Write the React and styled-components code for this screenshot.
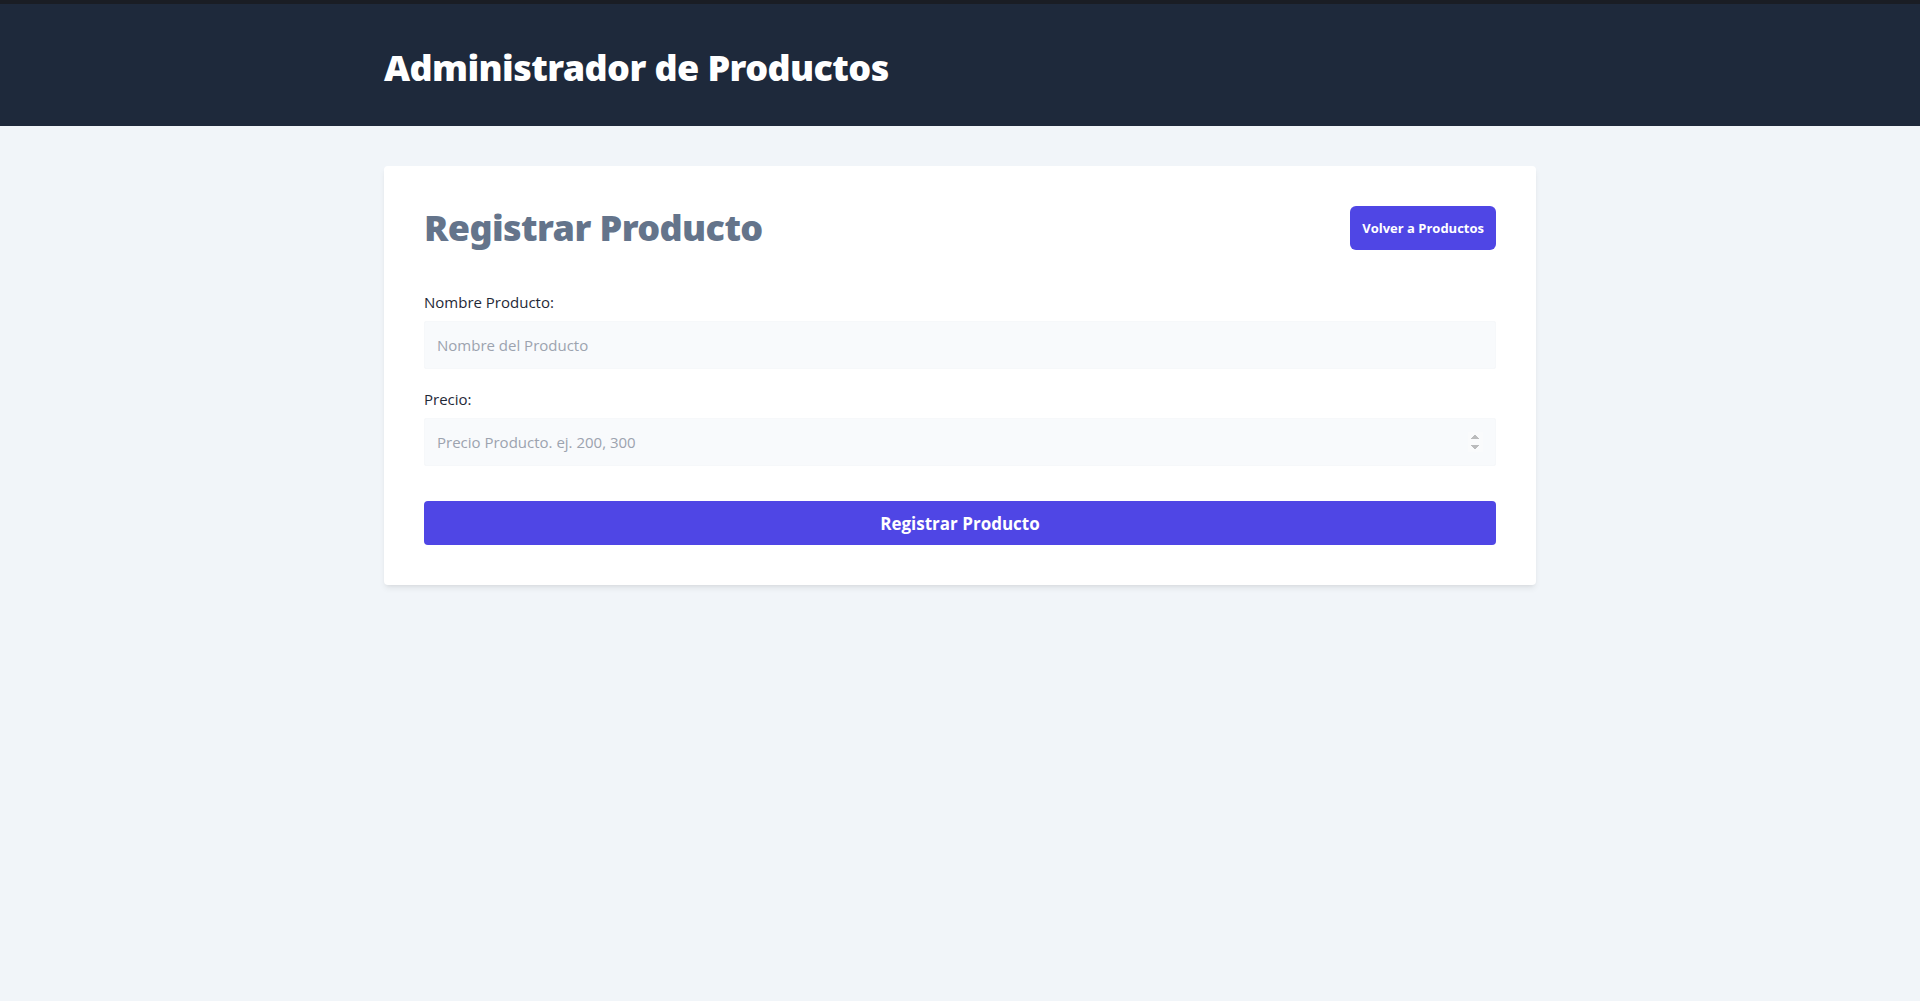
import React, { useState } from 'react';
import styled, { createGlobalStyle } from 'styled-components';

const GlobalStyle = createGlobalStyle`
  html, body {
    margin: 0;
    padding: 0;
  }
  body {
    background-color: #f1f5f9;
    font-family: "Open Sans", "Noto Sans", sans-serif;
    color: #1f2937;
    min-height: 100vh;
  }
  * {
    box-sizing: border-box;
  }
`;

const Header = styled.header`
  background-color: #1e293b;
  border-top: 4px solid #1a1d24;
  height: 126px;
  display: flex;
  align-items: center;
`;

const Wrapper = styled.div`
  width: 1152px;
  margin-right: auto;
  margin-left: auto;
`;

const AppTitle = styled.h1`
  margin: 0;
  color: #ffffff;
  font-family: "Noto Sans", "Open Sans", sans-serif;
  font-weight: 900;
  font-size: 36px;
  line-height: 40px;
  letter-spacing: -0.6px;
  padding-top: 6px;
`;

const Main = styled.main`
  padding-top: 40px;
`;

const Card = styled.div`
  background-color: #ffffff;
  border-radius: 4px;
  box-shadow: 0 4px 6px -1px rgba(0, 0, 0, 0.08), 0 2px 4px -2px rgba(0, 0, 0, 0.06);
  padding: 40px;
`;

const CardTop = styled.div`
  display: flex;
  justify-content: space-between;
  align-items: center;
  margin-bottom: 40px;
`;

const Heading = styled.h2`
  margin: 0;
  color: #64748b;
  font-family: "Noto Sans", "Open Sans", sans-serif;
  font-weight: 900;
  font-size: 36px;
  line-height: 44px;
  letter-spacing: -0.6px;
`;

const BackButton = styled.button`
  border: none;
  border-radius: 6px;
  background-color: #4f46e5;
  color: #ffffff;
  font-family: "Open Sans", "Noto Sans", sans-serif;
  font-weight: 700;
  font-size: 13px;
  height: 44px;
  padding: 0 12px;
  cursor: pointer;
`;

const Form = styled.form`
  display: flex;
  flex-direction: column;
`;

const Field = styled.div`
  margin-bottom: ${p => p.$last ? '35px' : '18px'};
`;

const Label = styled.label`
  display: block;
  font-size: 15px;
  line-height: 24px;
  color: #1f2937;
  margin-bottom: 7px;
`;

const Input = styled.input`
  display: block;
  width: 100%;
  height: 48px;
  padding: 12px;
  border: 1px solid #f6f8fa;
  border-radius: 2px;
  background-color: #f8fafc;
  font-family: "Open Sans", "Noto Sans", sans-serif;
  font-size: 15px;
  color: #1f2937;
  outline: none;

  &::placeholder {
    color: #9ca3af;
  }

  &::-webkit-inner-spin-button,
  &::-webkit-outer-spin-button {
    opacity: 0.55;
  }
`;

const Submit = styled.button`
  width: 100%;
  height: 44px;
  border: none;
  border-radius: 4px;
  background-color: #4f46e5;
  color: #ffffff;
  font-family: "Open Sans", "Noto Sans", sans-serif;
  font-weight: 700;
  font-size: 17px;
  padding-top: 2px;
  cursor: pointer;
`;

const App = () => {
  const [form, setForm] = useState({ nombre: '', precio: '' });

  const handleChange = (e) => {
    setForm((p) => ({ ...p, [e.target.name]: e.target.value }));
  };

  const handleSubmit = (e) => {
    e.preventDefault();
  };

  return (
    <>
      <GlobalStyle />
      <Header>
        <Wrapper>
          <AppTitle>Administrador de Productos</AppTitle>
        </Wrapper>
      </Header>
      <Main>
        <Wrapper>
          <Card>
            <CardTop>
              <Heading>Registrar Producto</Heading>
              <BackButton type="button">Volver a Productos</BackButton>
            </CardTop>
            <Form onSubmit={handleSubmit}>
              <Field>
                <Label htmlFor="nombre">Nombre Producto:</Label>
                <Input id="nombre" name="nombre" type="text" placeholder="Nombre del Producto" value={form.nombre} onChange={handleChange} />
              </Field>
              <Field $last>
                <Label htmlFor="precio">Precio:</Label>
                <Input id="precio" name="precio" type="number" placeholder="Precio Producto. ej. 200, 300" value={form.precio} onChange={handleChange} />
              </Field>
              <Submit type="submit">Registrar Producto</Submit>
            </Form>
          </Card>
        </Wrapper>
      </Main>
    </>
  );
};

export default App;
